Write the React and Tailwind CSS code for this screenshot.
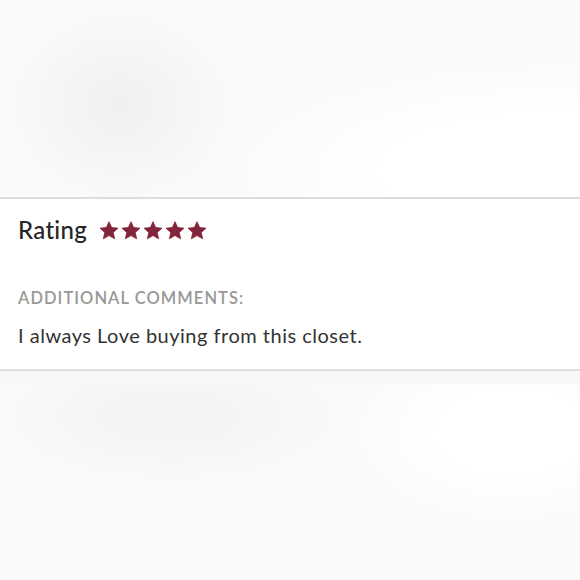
import React from "react";

const Star = () => (
  <svg width="20" height="19" viewBox="0 0 24 23" className="block">
    <path
      d="M12 0.8l3.2 7.1 7.7 0.8-5.8 5.2 1.7 7.6L12 17.6l-6.8 3.9 1.7-7.6L1.1 8.7l7.7-0.8z"
      fill="#82243a"
      stroke="#82243a"
      strokeWidth="1"
      strokeLinejoin="round"
    />
  </svg>
);

export default function App() {
  return (
    <div
      className="w-[580px] h-[580px] flex flex-col bg-white overflow-hidden"
      style={{ fontFamily: "Lato, 'Open Sans', sans-serif" }}
    >
      <div className="h-[197px] shrink-0 bg-[radial-gradient(ellipse_130px_110px_at_120px_105px,#f2f0ef_0%,#f6f5f4_45%,#faf9f9_80%,rgba(251,250,250,0)_100%),radial-gradient(ellipse_330px_110px_at_560px_170px,#ffffff_0%,#ffffff_55%,rgba(255,255,255,0)_100%),linear-gradient(#fbfafa,#fcfbfb)]" />
      <div className="h-[2px] shrink-0 bg-[#dedcdc]" />
      <div className="h-[170px] shrink-0 bg-white flex flex-col px-[18px]">
        <div className="flex items-center gap-[12px] mt-[16px] h-[30px]">
          <span className="text-[24px] font-medium text-[#262626] leading-none tracking-[0.3px]">
            Rating
          </span>
          <div className="flex items-center gap-[2px]">
            <Star />
            <Star />
            <Star />
            <Star />
            <Star />
          </div>
        </div>
        <div className="mt-[45px] text-[16.5px] font-semibold text-[#9a9897] tracking-[1.05px] leading-none">
          ADDITIONAL COMMENTS:
        </div>
        <div className="mt-[18px] text-[20px] text-[#333333] leading-none tracking-[0.5px]">
          I always Love buying from this closet.
        </div>
      </div>
      <div className="h-[2px] shrink-0 bg-[#e0dfdf]" />
      <div className="flex-1 bg-[linear-gradient(#f8f8f8_0px,#f8f8f8_12px,transparent_14px),radial-gradient(ellipse_180px_70px_at_170px_45px,#f3f3f3_0%,#f5f5f5_40%,#f8f8f8_75%,rgba(250,250,250,0)_100%),radial-gradient(ellipse_170px_100px_at_510px_60px,#ffffff_0%,#ffffff_45%,rgba(255,255,255,0)_100%),linear-gradient(#fafafa,#fbfafa)]" />
    </div>
  );
}
